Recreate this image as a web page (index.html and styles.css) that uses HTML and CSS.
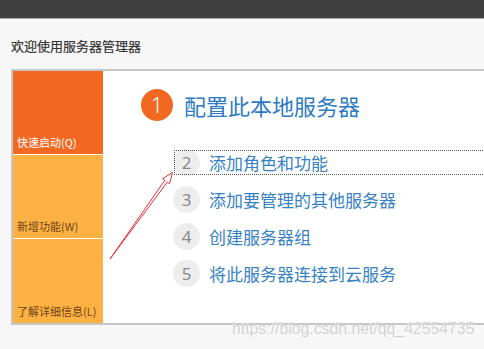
FILE: index.html
```html
<!DOCTYPE html>
<html lang="zh-CN">
<head>
  <meta charset="UTF-8">
  <meta name="viewport" content="width=device-width, initial-scale=1.0">
  <title>服务器管理器</title>
  <link rel="stylesheet" href="styles.css">
</head>
<body>
  <div class="topbar">
    <span class="topbar-title">服务器管理器 • 仪表板</span>
  </div>

  <div class="welcome">欢迎使用服务器管理器</div>

  <div class="panel">
    <div class="tiles">
      <div class="tile tile-quick">快速启动(Q)</div>
      <div class="tile tile-new">新增功能(W)</div>
      <div class="tile tile-more">了解详细信息(L)</div>
    </div>

    <div class="content">
      <div class="heading">
        <span class="step-big">1</span>
        <span class="heading-text">配置此本地服务器</span>
      </div>

      <div class="steps">
        <div class="step focused">
          <span class="step-num">2</span>
          <span class="step-text">添加角色和功能</span>
        </div>
        <div class="step">
          <span class="step-num">3</span>
          <span class="step-text">添加要管理的其他服务器</span>
        </div>
        <div class="step">
          <span class="step-num">4</span>
          <span class="step-text">创建服务器组</span>
        </div>
        <div class="step">
          <span class="step-num">5</span>
          <span class="step-text">将此服务器连接到云服务</span>
        </div>
      </div>
    </div>
  </div>

  <!-- 标注箭头 -->
  <svg class="arrow" width="484" height="349" viewBox="0 0 484 349">
    <polygon points="110,259 167.4,182 169.6,183.6 172.5,172.5 162.7,178.6 164.9,180.2"
             fill="#fff" stroke="#e8303a" stroke-width="1" stroke-linejoin="miter"/>
  </svg>

  <div class="watermark">https://blog.csdn.net/qq_42554735</div>
</body>
</html>
```

FILE: styles.css
```css
html, body {
  margin: 0;
  height: 100%;
  overflow: hidden;
}
body {
  position: relative;
  background-color: #f7f7f7;
  font-family: "Noto Sans CJK SC", "Noto Sans", sans-serif;
  color: #3c3c3c;
}
.topbar {
  height: 18px;
  background-color: #404040;
  border-bottom: 1px solid #a9a9a9;
  overflow: hidden;
}
.topbar-title {
  display: block;
  margin-top: -17px;
  padding-left: 4px;
  font-size: 15px;
  line-height: 17px;
  height: 17px;
  color: #fff;
}
.welcome {
  height: 50px;
  padding: 2px 0 0 11px;
  box-sizing: border-box;
  display: flex;
  align-items: center;
  font-size: 13px;
  color: #333;
  -webkit-text-stroke: 0.2px #333;
}
.panel {
  margin-left: 11px;
  height: 252px;
  display: flex;
  overflow: hidden;
  background-color: #fff;
  border-top: 2px solid #c6c6c6;
  border-left: 2px solid #c6c6c6;
  border-bottom: 2px solid #c6c6c6;
}
.tiles {
  width: 90px;
  flex-shrink: 0;
  display: flex;
  flex-direction: column;
  gap: 1px;
}
.tile {
  display: flex;
  align-items: flex-end;
  padding: 0 0 5px 4px;
  font-size: 11px;
  line-height: 13px;
  color: #6e4618;
}
.tile-quick {
  height: 83px;
  box-sizing: border-box;
  background-color: #f36821;
  color: #fff;
}
.tile-new,
.tile-more {
  height: 84px;
  box-sizing: border-box;
  background-color: #fdb143;
}
.content {
  flex: 1;
  padding: 18px 0 0 38px;
}
.heading {
  display: flex;
  align-items: center;
  gap: 11px;
  height: 32px;
}
.step-big {
  width: 32px;
  height: 32px;
  border-radius: 50%;
  background-color: #f36821;
  color: #fff;
  font-family: "Noto Sans", sans-serif;
  font-weight: 300;
  font-size: 21px;
  display: flex;
  align-items: center;
  justify-content: center;
}
.heading-text {
  font-size: 22px;
  color: #2d7bc2;
}
.steps {
  margin: 28px -20px 0 32px;
  display: flex;
  flex-direction: column;
  gap: 10px;
}
.step {
  height: 27px;
  display: flex;
  align-items: center;
  gap: 9px;
}
.step.focused {
  outline: 1px dotted #555;
  outline-offset: -2px;
}
.step-num {
  width: 27px;
  height: 27px;
  border-radius: 50%;
  background-color: #ededed;
  color: #8a8a8a;
  font-family: "Noto Sans", sans-serif;
  font-size: 17px;
  display: flex;
  align-items: center;
  justify-content: center;
}
.step-text {
  font-size: 17px;
  color: #3682c6;
}
.arrow {
  position: absolute;
  left: 0;
  top: 0;
  pointer-events: none;
}
.watermark {
  position: absolute;
  left: 232px;
  top: 320px;
  font-family: "Liberation Sans", Arial, sans-serif;
  font-size: 15.8px;
  line-height: 18px;
  color: #d2d2d2;
  text-shadow: 0 0 1px #fff, 0 0 1px #fff;
}
```
